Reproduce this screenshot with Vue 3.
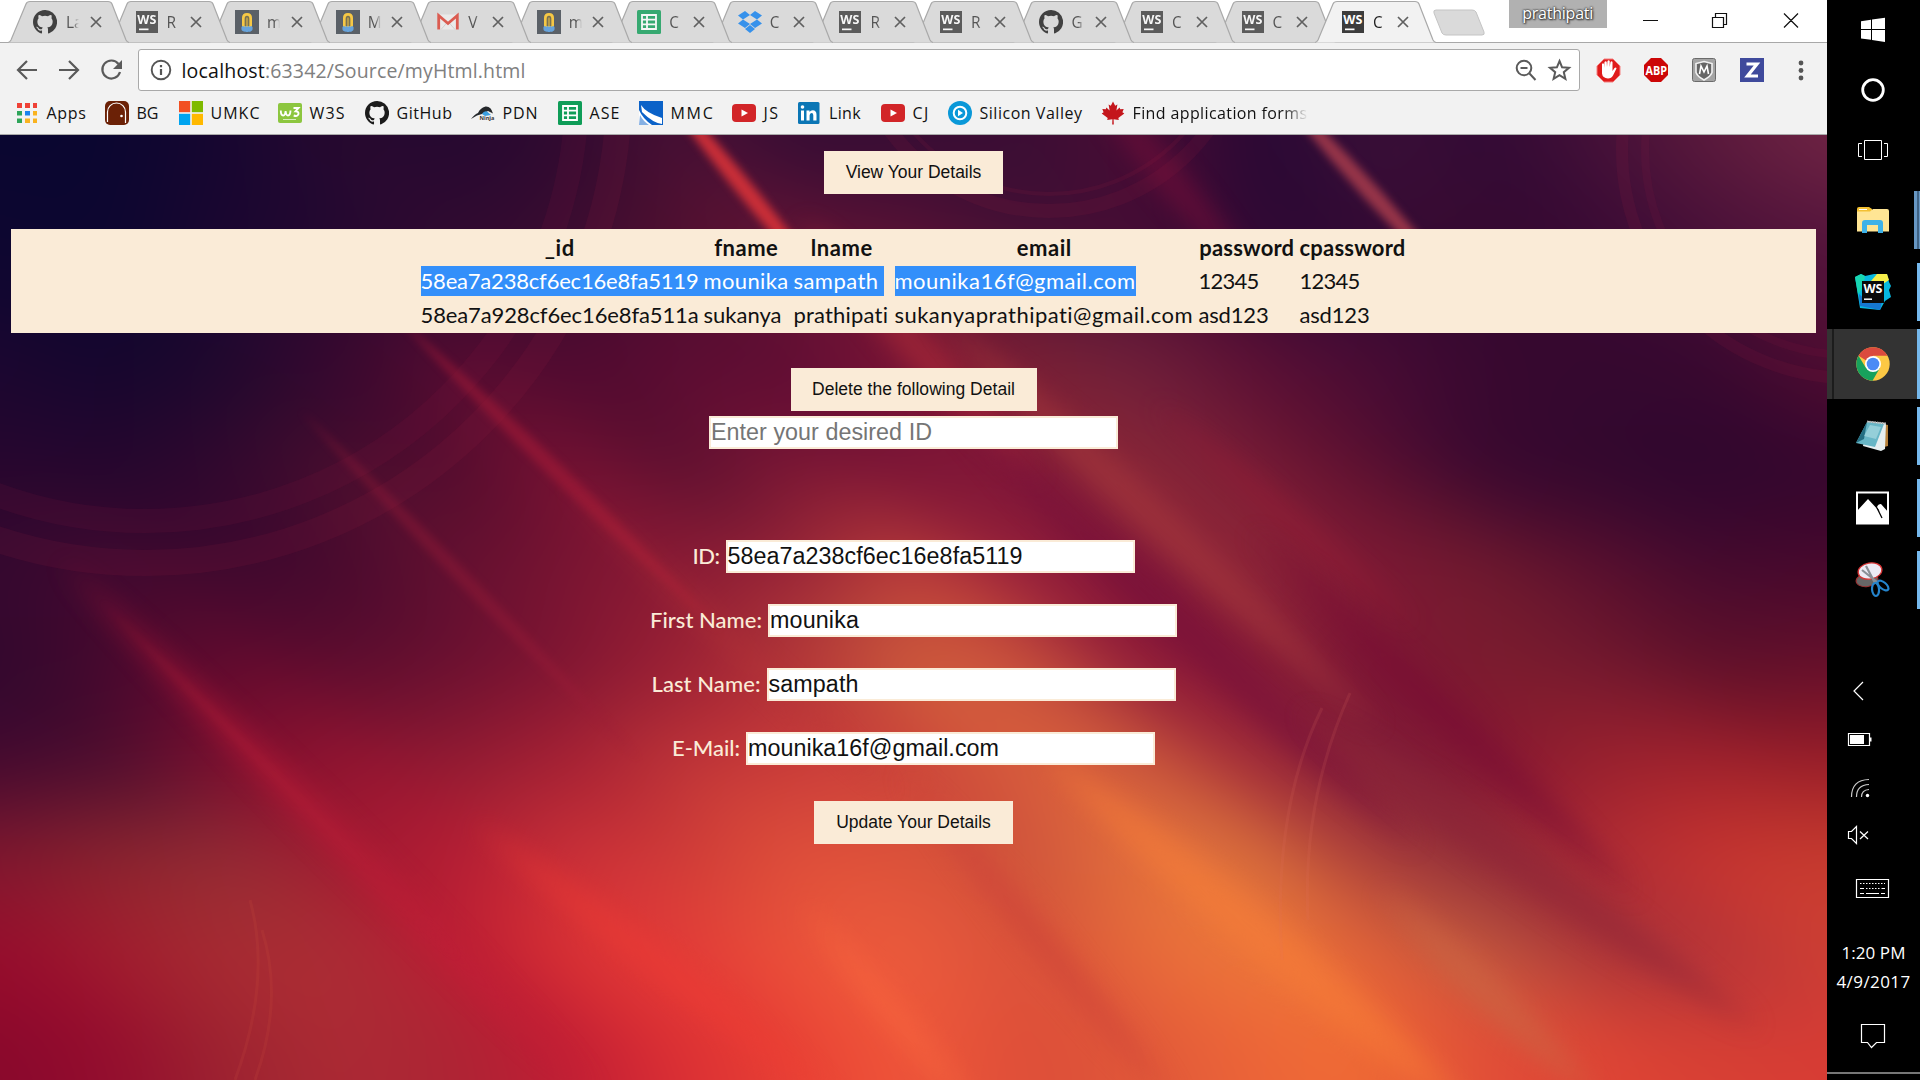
<script setup>
const measure = document.createElement('canvas').getContext('2d')

// Spreads a label over a given width by adjusting its letter spacing.
const vFit = {
  mounted(el, { value }) {
    const text = el.value || el.placeholder || el.textContent.trim()
    const cs = getComputedStyle(el)
    measure.font = `${cs.fontStyle} ${cs.fontWeight} ${cs.fontSize} ${cs.fontFamily}`
    const natural = measure.measureText(text).width
    el.style.letterSpacing = ((value - natural) / text.length).toFixed(3) + 'px'
  },
}

const tabs = [
  ['github', 'La'], ['ws', 'R'], ['mlab', 'm'], ['mlab', 'M'], ['gmail', 'V'], ['mlab', 'm'],
  ['sheets', 'C'], ['dropbox', 'C'], ['ws', 'R'], ['ws', 'R'], ['github', 'G'], ['ws', 'C'],
  ['ws', 'C'], ['ws', 'C'],
]

const bookmarks = [
  { icon: 'apps', label: 'Apps', pitch: 88, text: 40 },
  { icon: 'bg', label: 'BG', pitch: 74, text: 22 },
  { icon: 'ms', label: 'UMKC', pitch: 99, text: 50 },
  { icon: 'w3', label: 'W3S', pitch: 87, text: 36 },
  { icon: 'github', label: 'GitHub', pitch: 106, text: 56 },
  { icon: 'pdn', label: 'PDN', pitch: 87, text: 36 },
  { icon: 'sheets', label: 'ASE', pitch: 81, text: 31 },
  { icon: 'mmc', label: 'MMC', pitch: 93, text: 44 },
  { icon: 'youtube', label: 'JS', pitch: 66, text: 16 },
  { icon: 'linkedin', label: 'Link', pitch: 83, text: 32 },
  { icon: 'youtube', label: 'CJ', pitch: 67, text: 17 },
  { icon: 'play', label: 'Silicon Valley', pitch: 153, text: 103 },
  { icon: 'maple', label: 'Find application forms', pitch: 207, text: 175, fade: true },
]

const heads = [['_id', 30], ['fname', 64], ['lname', 62], ['email', 55], ['password', 95], ['cpassword', 106]]
const rows = [
  [['58ea7a238cf6ec16e8fa5119', 278], ['mounika', 85], ['sampath', 85], ['mounika16f@gmail.com', 241], ['12345', 60], ['12345', 60]],
  [['58ea7a928cf6ec16e8fa511a', 278], ['sukanya', 78], ['prathipati', 95], ['sukanyaprathipati@gmail.com', 299], ['asd123', 70], ['asd123', 70]],
]

const fields = [
  { label: 'ID:', lw: 27, value: '58ea7a238cf6ec16e8fa5119', vw: 295 },
  { label: 'First Name:', lw: 112, value: 'mounika', vw: 89 },
  { label: 'Last Name:', lw: 109, value: 'sampath', vw: 90 },
  { label: 'E-Mail:', lw: 68, value: 'mounika16f@gmail.com', vw: 251 },
]

// Backdrop: colour bands from top to bottom, each a horizontal gradient.
const bands = [
  [150, '#0a0630 #0a0630 #180630 #28092f #240830 #300a30 #4a1034 #340c34 #3a0c34 #3a0e34 #4c0c34 #250834 #3c0f38 #300a34 #451038 #5c1a3c #702444'],
  [240, '#0e0630 #0c0630 #1c0630 #240830 #300a30 #3c0c30 #54102f #641434 #5c1234 #451034 #480c34 #2c0834 #340a34 #36092f #3a0a34 #481038 #54143c'],
  [378, '#1c0630 #14062e #20082e #38082f #580c30 #500a2f #5c0c32 #600d34 #7e1434 #7a2034 #70203a #5c1034 #4a0c34 #38082f #35082f #38082f #500c30'],
  [473, '#28062e #25062e #34082e #4c0e2e #540c2e #7a1232 #5c1030 #7c1634 #7c1436 #801838 #8c2838 #7a1c34 #5c1030 #38082f #32082e #2e062e #34062e'],
  [569, '#35082f #420a2f #3e082e #480a2e #641030 #7a1432 #8a1a34 #9c2438 #c0403a #98203a #7c1438 #902838 #7e1834 #701a2e #5c102e #450a2e #48082c'],
  [665, '#30082e #45082e #640a2e #5c0c2e #6a1030 #801432 #9c2034 #b43838 #d0603c #c8503c #8c1838 #841a36 #7a1434 #7a1c2e #70182e #5c102a #640f2a'],
  [760, '#400830 #4c0c2e #7c0e2e #941430 #901a32 #a82034 #c03438 #cc3c3a #cc443a #d85c3c #cc583c #a02838 #802038 #801432 #98202e #a0202c #981c28'],
  [856, '#80182e #8c242e #962c34 #a01c32 #b41c34 #cc3038 #d03c38 #e0503a #dc543a #cc543c #e4703c #d8703c #a83c3a #902c38 #b02c34 #c83430 #c83c2e'],
  [952, '#980c2c #a41c2e #a82c32 #ac2c34 #bc1c34 #dc3434 #e43c38 #ec543a #ec5c3c #d8503a #e86c3a #ec783a #e06038 #c05c40 #a83438 #b43438 #cc4034'],
  [1047, '#88082c #940c2e #9c2430 #ac2a34 #ac2434 #c01c34 #dc3034 #e84034 #f0583a #dc4c38 #e0583a #ec6438 #f06c34 #e04c38 #e04434 #d84034 #d83c34'],
].map(([y, c], i, all) => {
  const top = i ? (all[i - 1][0] + y) / 2 : -300
  const bottom = i < all.length - 1 ? (y + all[i + 1][0]) / 2 : 1500
  return { top, height: bottom - top + 1, colors: c.split(' ') }
})

// A light streak that tapers to a point at both ends.
function streak(x0, y0, x1, y1, w) {
  const len = Math.hypot(x1 - x0, y1 - y0)
  const nx = (-(y1 - y0) / len) * w
  const ny = ((x1 - x0) / len) * w
  const mx = (x0 + x1) / 2
  const my = (y0 + y1) / 2
  return `M${x0} ${y0}Q${mx + nx} ${my + ny} ${x1} ${y1}Q${mx - nx} ${my - ny} ${x0} ${y0}z`
}

const streaks = [
  [640, 60, 850, 318, 17, '#d03038', 0.95, 1],
  [800, 220, 1040, 480, 34, '#b02c38', 0.6],
  [1262, 72, 1470, 302, 17, '#a83c4c', 0.85, 1],
  [1080, 70, 1270, 300, 24, '#80103a', 0.6],
  [400, 320, 720, 630, 16, '#b01c38', 0.5, 1],
  [300, 410, 640, 760, 14, '#9c1c38', 0.4, 1],
  [60, 560, 600, 1100, 26, '#c41c38', 0.5],
  [100, 600, 460, 960, 8, '#b42038', 0.35, 1],
  [470, 820, 850, 1110, 30, '#f03c34', 0.45],
  [560, 480, 900, 800, 20, '#b83438', 0.35],
  [940, 400, 1420, 850, 38, '#78103a', 0.6],
  [930, 310, 1380, 730, 38, '#ac3c3c', 0.55],
  [1150, 400, 1420, 630, 18, '#a01c38', 0.45],
  [1250, 530, 1640, 900, 30, '#780c34', 0.6],
  [1300, 710, 1760, 1030, 40, '#8c2438', 0.5],
  [1040, 750, 1480, 1120, 46, '#fa8038', 0.5],
  [1380, 890, 1600, 1100, 30, '#cc6844', 0.6],
  [900, 770, 1180, 1110, 26, '#c83c38', 0.5],
  [800, 900, 990, 1130, 22, '#fc6c40', 0.5],
].map(([a, b, c, d, w, color, opacity, sharp]) => ({ d: streak(a, b, c, d, w), color, opacity, sharp }))
</script>

<template>
  <div class="screen">
    <svg class="defs" width="0" height="0">
      <symbol id="github" viewBox="0 0 16 16"><path fill="#1b1b1b" d="M8 0C3.58 0 0 3.58 0 8c0 3.54 2.29 6.53 5.47 7.59.4.07.55-.17.55-.38v-1.49c-2.23.48-2.7-.94-2.7-.94-.36-.92-.89-1.17-.89-1.17-.72-.5.06-.49.06-.49.8.06 1.23.83 1.23.83.71 1.23 1.87.87 2.33.66.07-.52.28-.87.5-1.07-1.77-.2-3.64-.89-3.64-3.95 0-.87.31-1.59.82-2.15-.08-.2-.36-1.02.08-2.12 0 0 .67-.21 2.2.82a7.6 7.6 0 0 1 4 0c1.53-1.04 2.2-.82 2.2-.82.44 1.1.16 1.92.08 2.12.51.56.82 1.27.82 2.15 0 3.07-1.87 3.75-3.65 3.95.29.25.54.73.54 1.48v2.2c0 .21.15.46.55.38A8 8 0 0 0 8 0z"/></symbol>
      <symbol id="ws" viewBox="0 0 24 24"><rect x="1" y="1" width="22" height="22" fill="#3c3c3c"/><text x="2.3" y="13.5" font-family="Open Sans, sans-serif" font-weight="700" font-size="12.5" textLength="19" lengthAdjust="spacingAndGlyphs" fill="#fff">WS</text><rect x="4" y="18.5" width="9.500" height="1.700" fill="#fff"/></symbol>
      <symbol id="mlab" viewBox="0 0 24 24"><rect width="24" height="24" fill="#3b424b"/><path d="M7 18V8q0-5 5-5t5 5v10z" fill="#fdc420"/><path d="M10.300 16V9q0-2.500 1.700-2.500T13.700 9v7" fill="none" stroke="#5c5430" stroke-width="1.300"/><path d="M12 7v9" stroke="#5c5430"/><path d="M6.500 17q1.500-2 2.700 0 1.300-2 2.800 0 1.500-2 2.800 0 1.200-2 2.700 0 .5 4-1.500 4-1 1.500-2 .5-2 1-4 0-1 .500-2-.500-2 0-1.500-4z" fill="#4b96dc"/></symbol>
      <symbol id="gmail" viewBox="0 0 24 24"><path d="M2 4.500h20v15H2z" fill="#eee"/><path d="M5 19.500l7-8 7 8" fill="none" stroke="#d0d0d0"/><path d="M2.700 19.500V5.500L12 13.500l9.300-8v14" fill="none" stroke="#dc3d30" stroke-width="2.800"/></symbol>
      <symbol id="sheets" viewBox="0 0 24 24"><rect width="24" height="24" rx="1.500" fill="#0f9d58"/><path d="M5 5h14v14H5zM5 9.700h14M5 14.300h14M10 5v14" fill="none" stroke="#fff" stroke-width="1.800"/></symbol>
      <symbol id="dropbox" viewBox="0 0 24 24"><path fill="#0e7ff0" d="M7 1l5 4-7 4.500L0 5.500zM17 1l-5 4 7 4.500 5-4zM0 13.500l5-4 7 4.500-5 4zM24 13.500l-5-4-7 4.500 5 4zM12 15l5 4-5 4-5-4z"/></symbol>
      <symbol id="apps" viewBox="0 0 24 24"><path fill="#ef4136" d="M2 2h5v5H2zM10 2h5v5h-5zM18 2h4v5h-4z"/><path fill="#2ea55a" d="M2 10h5v4.500H2zM2 17.500h5V22H2z"/><path fill="#1a83ee" d="M10 10h5v4.500h-5z"/><path fill="#f9b320" d="M18 10h4v4.500h-4zM10 17.500h5V22h-5zM18 17.500h4V22h-4z"/></symbol>
      <symbol id="bg" viewBox="0 0 24 24"><rect width="24" height="24" rx="5" fill="#6b2106"/><path d="M2.500 21V11a9 9 0 0 1 18 0v11" fill="none" stroke="#fff" stroke-width="1.200"/><circle cx="16.500" cy="15" r="1.300" fill="#fff"/></symbol>
      <symbol id="ms" viewBox="0 0 24 24"><path fill="#f25022" d="M0 0h11.200v11.200H0z"/><path fill="#7fba00" d="M12.800 0H24v11.200H12.800z"/><path fill="#00a4ef" d="M0 12.800h11.200V24H0z"/><path fill="#ffb900" d="M12.800 12.800H24V24H12.800z"/></symbol>
      <symbol id="w3" viewBox="0 0 24 24"><rect y="2" width="24" height="20" rx="2" fill="#8cc63f"/><path d="M2.800 9.500q0 5 2.400 5 2 0 2.400-4.500.4 4.500 2.400 4.500 2.300 0 2.500-5M15.500 7h5l-3 3.300q3.300.2 3 2.700-1 3-4.800 1.500" fill="none" stroke="#fff" stroke-width="1.900"/><path d="M5 18.500h13" stroke="#d8ecc0" stroke-width="1"/></symbol>
      <symbol id="pdn" viewBox="0 0 24 24"><path fill="#25282b" d="M0 18q4-5 7-6 2-5 7.500-6.500 5.500-.5 7.500 7l-5-2.500-6 3-5 1.500z"/><path fill="#3a9fe0" d="M11 13q2-3.500 5-2.500l4 3.500-6 1z"/><text x="8.500" y="18.500" font-family="Open Sans, sans-serif" font-weight="700" font-size="5.500" fill="#333">Ninja</text></symbol>
      <symbol id="mmc" viewBox="0 0 24 24"><path fill="#0b62c8" d="M0 0h24v24H0z"/><path fill="#fff" d="M2 4q5 8 21 13v6q-9-1-20-12z"/><path fill="#fff" d="M0 9q4 9 13 15H0z"/><path fill="#0b62c8" d="M1 14q3 6 9 10H0z" opacity=".5"/></symbol>
      <symbol id="youtube" viewBox="0 0 24 24"><rect y="3" width="24" height="18" rx="4" fill="#d22528"/><path fill="#fff" d="M9.500 8.500v7l6.500-3.500z"/></symbol>
      <symbol id="linkedin" viewBox="0 0 24 24"><rect x="0" y="1" width="21.500" height="22" rx="1.500" fill="#0b76b5"/><path fill="#fff" d="M3 9.500h3v10H3zM8.500 9.500h3v1.500q1-1.800 3.200-1.800 3.800 0 3.800 4.500v5.800h-3.200v-5.200q0-2.300-1.700-2.300-2 0-2 2.500v5h-3.100z"/><circle cx="4.500" cy="6" r="1.800" fill="#fff"/></symbol>
      <symbol id="play" viewBox="0 0 24 24"><circle cx="12" cy="12" r="12" fill="#0a98d8"/><circle cx="12" cy="12" r="6.300" fill="none" stroke="#fff" stroke-width="2"/><path d="M10 8.700v6.600l5-3.300z" fill="#fff"/></symbol>
      <symbol id="maple" viewBox="0 0 24 24"><path fill="#c4161c" d="M12 .5l2.200 4.200 2.200-1.200-1 6 3.200-3 .6 1.800 3.500-.4-1.300 3.400 1.900 1.200-6 4.600.5 2-5.200-.8.200 5.200h-1.600l.2-5.200-5.200.8.500-2-6-4.600 1.900-1.200-1.300-3.400 3.500.4.600-1.800 3.200 3-1-6 2.200 1.200z"/></symbol>
    </svg>

    <div class="browser">
      <header class="tabstrip">
        <div v-for="(t, i) in tabs" :key="i" class="tab" :class="{ active: i === 13 }" :style="{ zIndex: i === 13 ? 30 : 20 - i }">
          <svg class="shape" width="124" height="44" viewBox="0 0 124 44">
            <path d="M0 42.500 Q2 42 3 40 L18 4 Q19 1.500 22 1.500 H100 Q103 1.500 104 4 L118 40 Q119 42 121 42.500" />
          </svg>
          <svg class="fav" width="24" height="24"><use :href="'#' + t[0]" /></svg>
          <span class="title">{{ t[1] }}</span>
          <svg class="close" width="12" height="12" viewBox="0 0 12 12"><path d="M1 1L11 11M11 1L1 11" /></svg>
        </div>
        <svg class="newtab" width="54" height="30" viewBox="0 0 54 30"><path d="M4 1H40Q43 1 44 3L52 23Q53 26 50 26H14Q11 26 10 24L2 4Q1 1 4 1z" /></svg>
        <div class="user"><span v-fit="71">prathipati</span></div>
        <svg class="winctl" width="180" height="42" viewBox="0 0 180 42">
          <path d="M7 20.500H22M76.500 17.500h11v10h-11zM79.500 17v-3.500h11v11h-2.500M148 13.500l14 14M162 13.500l-14 14" />
        </svg>
      </header>

      <div class="toolbar">
        <svg class="nav" width="125" height="42" viewBox="0 0 125 42">
          <path d="M37 21H19M27 12l-9 9 9 9M59 21h18M69 12l9 9-9 9" />
          <path d="M118.500 15A9 9 0 1 0 120 23" /><path class="solid" d="M122 11v9h-9z" />
        </svg>
        <div class="omnibox">
          <svg width="22" height="22" viewBox="0 0 22 22"><circle cx="11" cy="11" r="9.300" fill="none" stroke="#555" stroke-width="1.900" /><path d="M11 10v6M11 6v2.200" stroke="#555" stroke-width="2.200" /></svg>
          <div class="url"><span v-fit="83.500" class="host">localhost</span><span v-fit="260.500">:63342/Source/myHtml.html</span></div>
          <svg width="60" height="26" viewBox="0 0 60 26" class="omni-icons">
            <circle cx="10" cy="11" r="7.300" /><path d="M15.500 16.500l6 6.500M6.500 11h7" />
            <path class="star" d="M45.500 4l2.600 6.300 6.900.5-5.200 4.400 1.600 6.600-5.900-3.600-5.900 3.600 1.600-6.600-5.200-4.400 6.900-.5z" />
          </svg>
        </div>
        <svg class="ext" width="230" height="42" viewBox="1590 49 230 42">
          <path fill="#e01b1b" stroke="#f48080" d="M1604 59h9l7 7v9l-7 7h-9l-7-7v-9z" />
          <path fill="#fff" d="M1602 70v-6q1-1.500 2 0v4l.5-6q1.300-1.500 2.200 0l.3 5 .5-6q1.300-1.500 2.200 0v6l.8-5q1.300-1.300 2 0v9l2-3q1.800-1 2 .5l-3.500 7q-1.500 3-5 3-5.500-.5-6-5z" />
          <path fill="#cc0707" d="M1651 58h10l7 7v10l-7 7h-10l-7-7v-10z" />
          <text x="1645.500" y="74.500" font-family="Open Sans, sans-serif" font-weight="700" font-size="11.500" textLength="21.500" lengthAdjust="spacingAndGlyphs" fill="#fff">ABP</text>
          <rect x="1692.500" y="58.500" width="23" height="23" rx="2" fill="#a4a4a4" stroke="#6b6b6b" />
          <path fill="#666" stroke="#f2f2f2" stroke-width="1.600" d="M1704 61.500l8 2v9q-1.500 4-8 7.500-6.500-3.500-8-7.500v-9z" />
          <path fill="none" stroke="#fff" stroke-width="1.600" d="M1699.500 74l1.500-8 3 6 3-6 1.500 8" />
          <rect x="1740" y="58" width="24" height="24" fill="#3f4a9c" />
          <path fill="none" stroke="#fff" stroke-width="3.200" d="M1746.500 64h10.500l-9.500 12h10.500" />
          <g fill="#555"><circle cx="1801" cy="63" r="2.400" /><circle cx="1801" cy="70.500" r="2.400" /><circle cx="1801" cy="78" r="2.400" /></g>
        </svg>
      </div>

      <nav class="bookmarks">
        <div v-for="b in bookmarks" :key="b.label" class="bm" :class="[b.icon, { fade: b.fade }]" :style="{ width: b.pitch + 'px' }">
          <svg width="24" height="24"><use :href="'#' + b.icon" /></svg>
          <span v-fit="b.text">{{ b.label }}</span>
        </div>
      </nav>

      <main class="page">
        <svg class="backdrop" viewBox="0 135 1827 945" width="1827" height="945">
          <defs>
            <linearGradient v-for="(b, i) in bands" :id="'band' + i" :key="i" gradientUnits="userSpaceOnUse" x1="0" x2="1827" y1="0" y2="0">
              <stop v-for="(c, j) in b.colors" :key="j" :offset="j / 16" :stop-color="c" />
            </linearGradient>
            <filter id="mesh" filterUnits="userSpaceOnUse" x="-400" y="-1600" width="3000" height="3000" color-interpolation-filters="sRGB"><feGaussianBlur stdDeviation="62 16" /></filter>
            <filter id="beam" filterUnits="userSpaceOnUse" x="-100" y="-50" width="2050" height="1250" color-interpolation-filters="sRGB"><feGaussianBlur stdDeviation="13" /></filter>
            <filter id="ray" filterUnits="userSpaceOnUse" x="-100" y="-50" width="2050" height="1250" color-interpolation-filters="sRGB"><feGaussianBlur stdDeviation="4.500" /></filter>
          </defs>
          <g transform="rotate(45)" filter="url(#mesh)">
            <g transform="rotate(-45)">
              <rect v-for="(b, i) in bands" :key="i" x="-400" width="2700" :y="b.top" :height="b.height" :fill="`url(#band${i})`" />
            </g>
          </g>
          <path v-for="(s, i) in streaks" :key="'s' + i" :d="s.d" :fill="s.color" :opacity="s.opacity" :filter="s.sharp ? 'url(#ray)' : 'url(#beam)'" />
          <g fill="none" stroke="#a02040">
            <circle cx="145" cy="89" r="432" stroke-width="24" opacity=".1" />
            <circle cx="145" cy="89" r="474" stroke-width="26" opacity=".12" />
            <circle cx="1049" cy="14" r="197" stroke-width="14" opacity=".12" />
            <circle cx="1049" cy="14" r="180" stroke-width="4" opacity=".12" />
            <circle cx="1850" cy="150" r="228" stroke-width="12" opacity=".12" />
            <circle cx="1850" cy="150" r="205" stroke-width="8" opacity=".1" />
            <path d="M1322 708Q1272 810 1282 960M1350 693Q1302 800 1308 920" stroke="#e07060" stroke-width="3" opacity=".14" />
            <path d="M250 900Q272 980 235 1080M262 930Q284 1000 255 1080" stroke="#d05040" stroke-width="3" opacity=".16" />
          </g>
        </svg>
        <div class="content">
          <button class="btn view"><span v-fit="136">View Your Details</span></button>
          <div class="results">
            <div class="grid">
              <div v-for="h in heads" :key="h[0]" class="cell head"><span v-fit="h[1]">{{ h[0] }}</span></div>
            </div>
            <div v-for="(r, i) in rows" :key="i" class="grid" :class="{ selected: i === 0 }">
              <div v-for="(c, j) in r" :key="j" class="cell"><span v-fit="c[1]">{{ c[0] }}</span></div>
            </div>
          </div>
          <button class="btn delete"><span v-fit="203">Delete the following Detail</span></button>
          <input v-fit="221" class="field wanted" placeholder="Enter your desired ID" />
          <div v-for="f in fields" :key="f.label" class="row">
            <label v-fit="f.lw" :style="{ width: f.lw + 'px' }">{{ f.label }}</label>
            <input v-fit="f.vw" class="field" :value="f.value" />
          </div>
          <button class="btn update"><span v-fit="155">Update Your Details</span></button>
        </div>
      </main>
    </div>

    <aside class="taskbar">
      <svg height="60" viewBox="1827 0 93 60"><path fill="#fff" d="M1861 21.300l10-1.500v9.200h-10zM1872 19.600l13-1.800V29h-13zM1861 30h10v9.800l-10-1.300zM1872 30h13v12l-13-1.900z" /></svg>
      <svg height="60" viewBox="1827 60 93 60"><circle cx="1873" cy="90" r="10.300" fill="none" stroke="#fff" stroke-width="2.800" /></svg>
      <svg height="64" viewBox="1827 120 93 64"><path fill="none" stroke="#fff" d="M1864.500 140.500h17v19h-17zM1862 143.500h-3.500v13h3.500M1884 143.500h3.500v13h-3.500" /></svg>
      <svg height="72" viewBox="1827 184 93 72">
        <path fill="#f3c032" d="M1857 209q0-2 2-2h10l3 2v6h-15z" /><path fill="#ffe594" d="M1857 211.500h13l3-2.500h14q2 0 2 2v20.500h-32z" />
        <path fill="#3eb2e8" d="M1862 233v-10q0-3 3-3h15q3 0 3 3v10h-5v-8h-11v8z" /><path stroke="#fff" d="M1859 209.500h8" />
        <path fill="#6797c4" d="M1914 191h6v58h-6z" /><path fill="#3f6284" d="M1917 191h2v58h-2z" />
      </svg>
      <svg height="72" viewBox="1827 256 93 72">
        <path fill="#07b9e0" d="M1855 277l6-3 4 2 9-2h13l2 8 2 4-2 4 2 7-6 4-5 9-20-2z" /><path fill="#f6ee49" d="M1871 281l6-7h10l2 6-6 4z" />
        <path fill="#18d6b0" d="M1855 277l6-3 4 2-2 12-5 6z" /><path fill="#1677cf" d="M1859 294l9 8h14l-2 8-20-4z" />
        <path fill="#0a0a0a" d="M1862 281h22v22h-22z" /><text x="1863.500" y="293" font-family="Open Sans, sans-serif" font-weight="700" font-size="12" textLength="19" lengthAdjust="spacingAndGlyphs" fill="#fff">WS</text><path stroke="#fff" stroke-width="1.500" d="M1864 299.200h8" />
        <path fill="#76b9ed" d="M1917 263h3v58h-3z" />
      </svg>
      <svg height="72" viewBox="1827 328 93 72">
        <path fill="#333" d="M1827 329h93v70h-93z" /><path fill="#1c1c1c" d="M1832 329h2v70h-2z" />
        <circle cx="1873" cy="364" r="16.700" fill="#fcc844" />
        <path fill="#db4a3e" d="M1858.500 355.700a16.700 16.700 0 0 1 29 0H1873v9z" /><path fill="#17a25c" d="M1858.500 355.700a16.700 16.700 0 0 0 14 25l7.500-13-14.500-.5z" />
        <circle cx="1873" cy="364" r="8" fill="#fff" /><circle cx="1873" cy="364" r="6.300" fill="#4b8bf5" />
        <path fill="#76b9ed" d="M1917 329h3v70h-3z" />
      </svg>
      <svg height="72" viewBox="1827 400 93 72">
        <path fill="#b5803a" d="M1883 424l5 1v21l-4 1z" /><path fill="#e6eef0" d="M1868 421l18 2-1 26-4 2-18-5z" /><path fill="#68b6c6" d="M1867 422l17 2-9 23-19-4z" />
        <path fill="#246e82" d="M1867 422l-11 21 8-4z" /><path fill="#b4e0e6" opacity=".6" d="M1870 425l11 2-5 12-12-3z" /><path stroke="#aaa" stroke-width="2" stroke-dasharray="1.500 1" d="M1867 421.500l19 2" />
        <path fill="#76b9ed" d="M1917 407h3v58h-3z" />
      </svg>
      <svg height="72" viewBox="1827 472 93 72">
        <path fill="none" stroke="#fff" stroke-width="2" d="M1857 492.500h31v31h-31z" /><path fill="#fff" d="M1857 511l11-12 12 13-3-5q1-3 4-3l8 9v11h-32z" /><path stroke="#000" stroke-width="1.300" d="M1877 508l5 10" />
        <path fill="#76b9ed" d="M1917 479h3v58h-3z" />
      </svg>
      <svg height="72" viewBox="1827 544 93 72">
        <ellipse cx="1867" cy="580" rx="11" ry="6.500" fill="#666" stroke="#a03030" transform="rotate(-8 1867 580)" />
        <ellipse cx="1870" cy="571" rx="12" ry="8" fill="#eceaf4" stroke="#d63434" stroke-width="1.300" transform="rotate(-10 1870 571)" />
        <path stroke="#8a8f96" stroke-width="2.200" d="M1862 570l15 12M1866 566l9 17" /><g fill="none" stroke="#2484cc" stroke-width="2.200"><ellipse cx="1875.500" cy="589.500" rx="3.500" ry="6.500" transform="rotate(-5 1875 589)" /><ellipse cx="1883" cy="585.500" rx="3.300" ry="6.500" transform="rotate(-50 1883 585.500)" /></g>
        <path fill="#76b9ed" d="M1917 551h3v58h-3z" />
      </svg>
      <svg class="tray" height="300" viewBox="1827 616 93 300">
        <g fill="none" stroke="#fff" stroke-width="1.200">
          <path d="M1863 682l-9 9 9 9" /><path d="M1848.500 733.500h21v12h-21z" />
          <path d="M1851.500 797q0-17 17.500-17.500M1856.500 797q0-12 12.500-12.500M1861.500 797q0-7 7.500-7.500" stroke="#ccc" />
          <path d="M1848.500 831.500h3l5-5v17l-5-5h-3zM1860 831.500l8 7.500M1868 831.500l-8 7.500" /><path d="M1856.500 879.500h32v18h-32z" />
          <path stroke-dasharray="1.500 1.500" d="M1860 883.500h25" /><path stroke-dasharray="4 2 1.500 1.500 1.500 1.500 1.500 1.500 1.500 1.500 1.500 2 4" d="M1860 888.500h25" /><path stroke-dasharray="4 2 13 2 4 9" d="M1860 893.500h25" />
        </g>
        <path fill="#fff" d="M1850 735h14v9h-14zM1870 737.500h1.500v4h-1.500z" /><circle cx="1867.500" cy="795.500" r="1.700" fill="#fff" />
      </svg>
      <div class="clock"><span v-fit="64">1:20 PM</span><span v-fit="74">4/9/2017</span></div>
      <svg height="74" viewBox="1827 1006 93 74"><path fill="none" stroke="#fff" stroke-width="1.200" d="M1861.500 1024.500h23v18h-8l-5 5-4-5h-6z" /><path fill="#777" d="M1827 1072h93v2h-93z" /></svg>
    </aside>
  </div>
</template>

<style>
body { margin: 0; overflow: hidden; }
</style>

<style scoped>
.screen { display: flex; width: 1920px; height: 1080px; overflow: hidden; background: #000; font-family: "Open Sans", "Noto Sans", sans-serif; }
.defs { display: none; }
.browser { width: 1827px; display: flex; flex-direction: column; background: #f2f2f2; }
.tabstrip { position: relative; display: flex; height: 43px; padding-left: 8px; box-sizing: border-box; background: #fff; box-shadow: inset 0 -1px #a8a8a8; flex: none; }
.tab { position: relative; width: 100.550px; height: 43px; flex: none; display: flex; align-items: center; padding-left: 26px; box-sizing: border-box; }
.tab:first-child { padding-left: 25px; }
.shape { position: absolute; left: 0; top: 0; z-index: -1; }
.shape path { fill: #dadada; stroke: #a9a9a9; stroke-width: 1.200; }
.active .shape path { fill: #f2f2f2; }
.fav { opacity: .8; flex: none; }
.active .fav { opacity: 1; }
.title { width: 13px; margin-left: 8px; overflow: hidden; font-size: 15.500px; color: #555; -webkit-mask-image: linear-gradient(90deg, #000 55%, transparent); white-space: nowrap; }
.tab:first-child .title { margin-left: 9px; }
.active .title { color: #222; }
.close { margin-left: 10.500px; flex: none; }
.close path { stroke: #606060; stroke-width: 1.700; }
.newtab { margin: 9px 0 0 16px; flex: none; }
.newtab path { fill: #dadada; stroke: #c4c4c4; }
.user { width: 98px; height: 28px; margin-left: 23px; background: #b1b1b1; color: #fff; font-size: 16px; line-height: 27px; text-align: center; text-shadow: 0 0 2px #333, 0 0 2px #333, 1px 1px 2px #333; flex: none; }
.winctl { position: absolute; right: 11px; top: 0; }
.winctl path { fill: none; stroke: #111; stroke-width: 1.200; }
.toolbar { display: flex; height: 48px; padding-top: 6px; box-sizing: border-box; flex: none; }
.nav { margin-right: 13px; }
.nav path { fill: none; stroke: #5a5a5a; stroke-width: 2.200; }
.nav .solid { fill: #5a5a5a; stroke: none; }
.omnibox { width: 1442px; height: 42px; box-sizing: border-box; border: 1px solid #a9a9a9; border-radius: 3px; background: #fff; display: flex; align-items: center; padding: 0 5px 0 11px; }
.url { flex: 1; margin-left: 9.500px; padding-top: 1px; font-size: 19.500px; color: #808080; white-space: nowrap; line-height: 38px; }
.host { color: #111; }
.omni-icons { fill: none; stroke: #5a5a5a; stroke-width: 2; }
.ext { margin-left: 10px; }
.bookmarks { display: flex; height: 44px; padding-left: 17px; box-sizing: border-box; border-bottom: 1px solid #aaa; flex: none; }
.bm { display: flex; align-items: center; flex: none; font-size: 16px; color: #111; white-space: nowrap; }
.bm svg { margin-right: 7.500px; flex: none; }
.bm.apps svg { margin: 0 7.500px 0 -2px; }
.bm.linkedin svg { margin-right: 7px; }
.fade span { -webkit-mask-image: linear-gradient(90deg, #000 86%, transparent); }
.page { position: relative; height: 945px; overflow: hidden; background: #701035; }
.backdrop { position: absolute; left: 0; top: 0; }
.content { position: relative; display: flex; flex-direction: column; align-items: center; padding-top: 16px; font-family: Lato, sans-serif; }
.btn { height: 43px; padding: 0; border: 0; background: #faebd7; color: #111; font: 17.500px "Liberation Sans", sans-serif; white-space: nowrap; }
.view { width: 179px; }
.delete { width: 246px; }
.update { width: 199px; margin-top: 36px; }
.results { width: 1805px; height: 104px; margin: 35px 0; padding: 3px 0 0 410px; box-sizing: border-box; background: #faebd7; font-size: 22px; color: #111; align-self: flex-start; margin-left: 11px; }
.grid { display: grid; grid-template-columns: 283px 90px 101px 304px 101px 110px; height: 34px; white-space: nowrap; }
.cell { line-height: 29px; }
.cell span { margin-left: -0.500px; }
.head { text-align: center; font-weight: 700; padding-right: 5px; line-height: 31px; }
.selected .cell { height: 30px; }
.selected .cell:nth-child(-n+4) { background: #338ffa; color: #fff; }
.selected .cell:nth-child(3) { margin-right: 11px; }
.selected .cell:nth-child(4) { margin-right: 63px; }
.field { width: 409px; height: 33px; box-sizing: border-box; border: 2px solid #faebd7; padding: 0; background: #fff; color: #111; font: 23.300px "Liberation Sans", sans-serif; outline: 0; border-radius: 0; }
.field::placeholder { color: #757575; opacity: 1; }
.wanted { margin: 5px 0 60px; }
.row { display: flex; align-items: center; gap: 6px; margin-top: 31px; height: 33px; }
label { color: #faebd7; font-size: 22px; font-weight: 500; white-space: nowrap; line-height: 30px; padding-bottom: 2px; }
.taskbar { width: 93px; display: flex; flex-direction: column; background: #000; }
.taskbar svg { width: 93px; flex: none; }
.clock { height: 90px; display: flex; flex-direction: column; align-items: center; justify-content: center; box-sizing: border-box; padding-top: 12px; color: #fff; font-size: 17px; line-height: 29px; white-space: nowrap; }
</style>
